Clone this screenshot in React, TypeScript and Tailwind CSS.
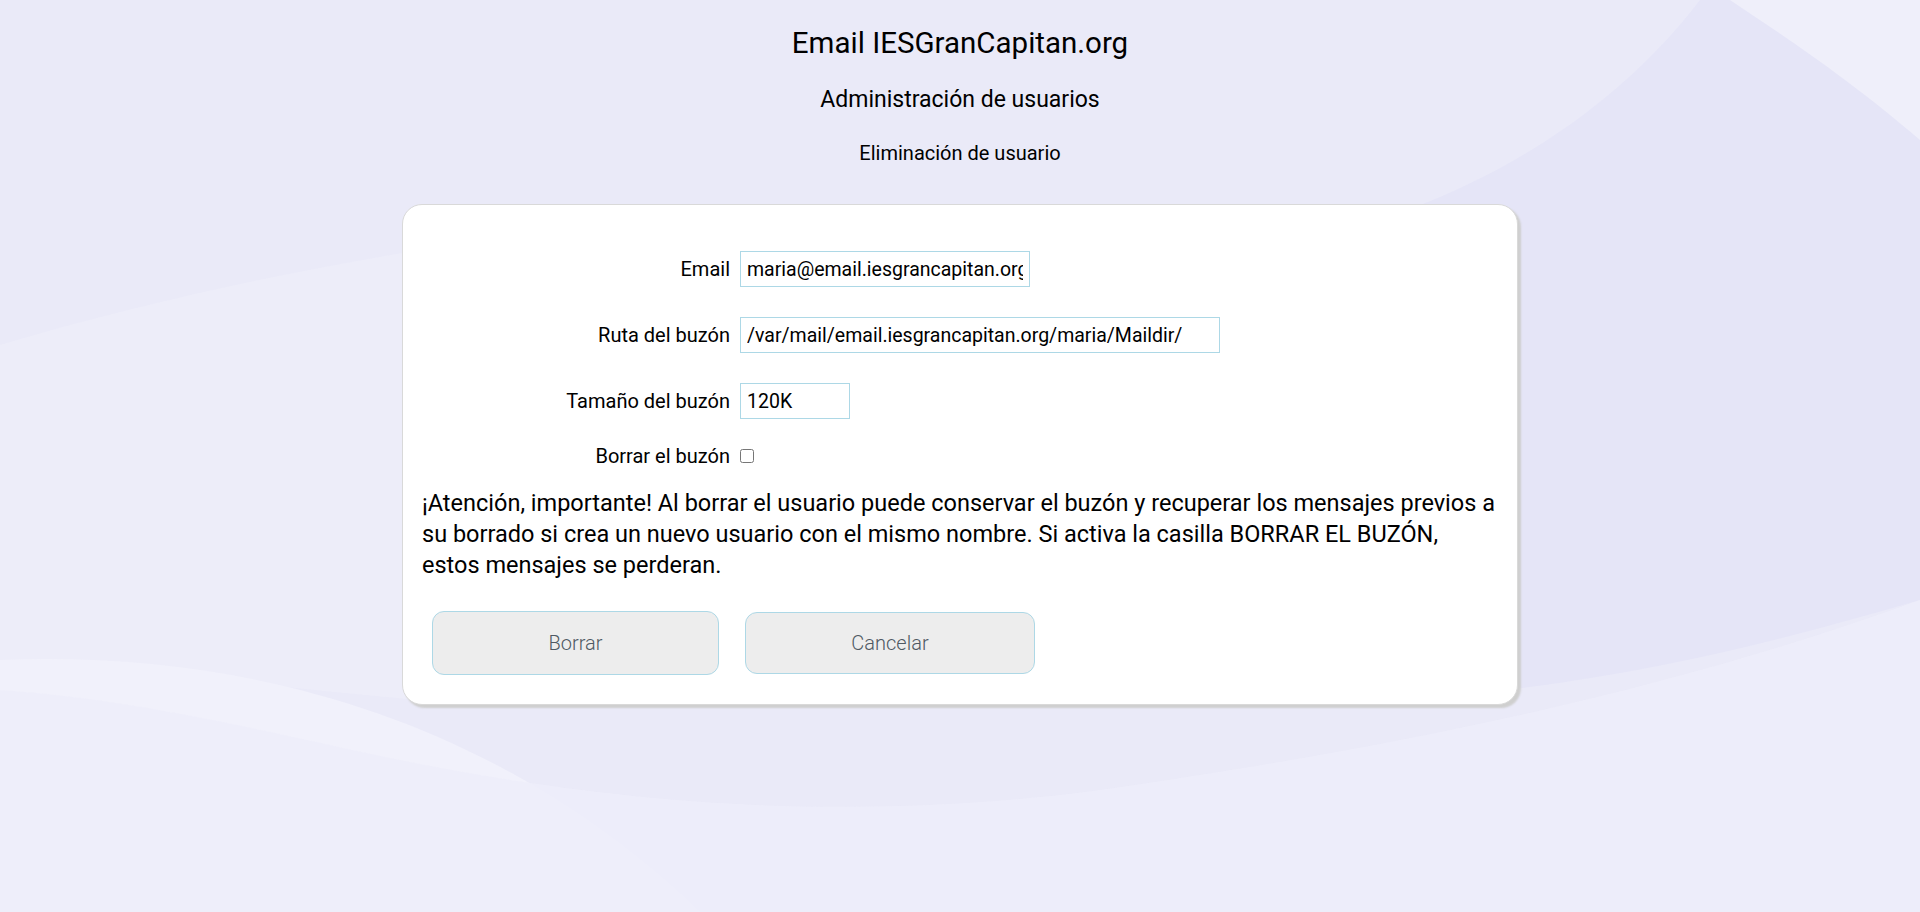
import React from 'react';

const Waves = () => (
  <svg
    className="absolute inset-0 h-full w-full"
    viewBox="0 0 1920 912"
    preserveAspectRatio="none"
    aria-hidden="true"
  >
    <rect width="1920" height="912" fill="#eaeaf8" />
    {/* darker sweep on the right */}
    <path d="M1700 0 C1600 130 1460 200 1330 235 L1330 700 C1550 700 1750 650 1920 600 L1920 0 Z" fill="#e5e5f7" />
    <path d="M1730 0 L1920 0 L1920 140 C1850 80 1790 40 1730 0 Z" fill="#efeffa" />
    {/* lighter band on the left */}
    <path d="M0 345 C150 300 300 270 420 250 L420 700 C300 690 150 670 0 660 Z" fill="#ededf9" />
    <path d="M0 660 C250 650 500 720 700 912 L0 912 Z" fill="#f1f1fb" />
    <path d="M1920 600 C1700 680 1450 740 1100 790 C800 830 550 790 400 760 C300 740 150 700 0 690 L0 912 L1920 912 Z" fill="#eeeefa" opacity="0.8" />
  </svg>
);

interface FieldProps {
  label: string;
  value: string;
  width: string;
}

const Field: React.FC<FieldProps> = ({ label, value, width }) => (
  <div className="flex items-center">
    <label className="w-[318px] pr-[10px] text-right text-[20px] leading-[24px] text-black">{label}</label>
    <input
      type="text"
      defaultValue={value}
      className={`${width} h-[36px] border border-[#add8e6] bg-white px-[6px] text-[19.5px] text-black outline-none`}
    />
  </div>
);

export default function App() {
  return (
    <div className="relative h-[912px] w-full overflow-hidden font-['Roboto','Liberation_Sans',sans-serif] text-black">
      <Waves />
      <div className="relative flex flex-col items-center">
        <h1 className="mt-[25px] text-[29.5px] leading-[36px]">Email IESGranCapitan.org</h1>
        <h2 className="mt-[25px] text-[23px] leading-[28px]">Administración de usuarios</h2>
        <h3 className="mt-[27px] text-[20px] leading-[24px]">Eliminación de usuario</h3>

        <div className="mt-[39px] w-[1116px] rounded-[20px] border border-[#d9d9d9] bg-white px-[19px] pb-[29px] pt-[46px] shadow-[3px_3px_2px_#cfcfcf]">
          <div className="flex flex-col gap-[30px]">
            <Field label="Email" value="maria@email.iesgrancapitan.org" width="w-[290px]" />
            <Field label="Ruta del buzón" value="/var/mail/email.iesgrancapitan.org/maria/Maildir/" width="w-[480px]" />
            <Field label="Tamaño del buzón" value="120K" width="w-[110px]" />
          </div>
          <div className="mt-[25px] flex items-center">
            <label className="w-[318px] pr-[10px] text-right text-[20px] leading-[24px]">Borrar el buzón</label>
            <input type="checkbox" className="m-0 h-[14px] w-[14px]" />
          </div>

          <p className="mt-[20px] text-[23.5px] leading-[31px]">
            ¡Atención, importante! Al borrar el usuario puede conservar el buzón y recuperar los mensajes previos a su
            borrado si crea un nuevo usuario con el mismo nombre. Si activa la casilla BORRAR EL BUZÓN, estos mensajes se
            perderan.
          </p>

          <div className="mt-[30px] flex items-center gap-[26px] pl-[10px]">
            <button className="h-[64px] w-[287px] rounded-[12px] border border-[#add8e6] bg-[#ededed] text-[20px] font-light text-[#4f5963]">
              Borrar
            </button>
            <button className="h-[62px] w-[290px] rounded-[12px] border border-[#add8e6] bg-[#ededed] text-[20px] font-light text-[#4f5963]">
              Cancelar
            </button>
          </div>
        </div>
      </div>
    </div>
  );
}
